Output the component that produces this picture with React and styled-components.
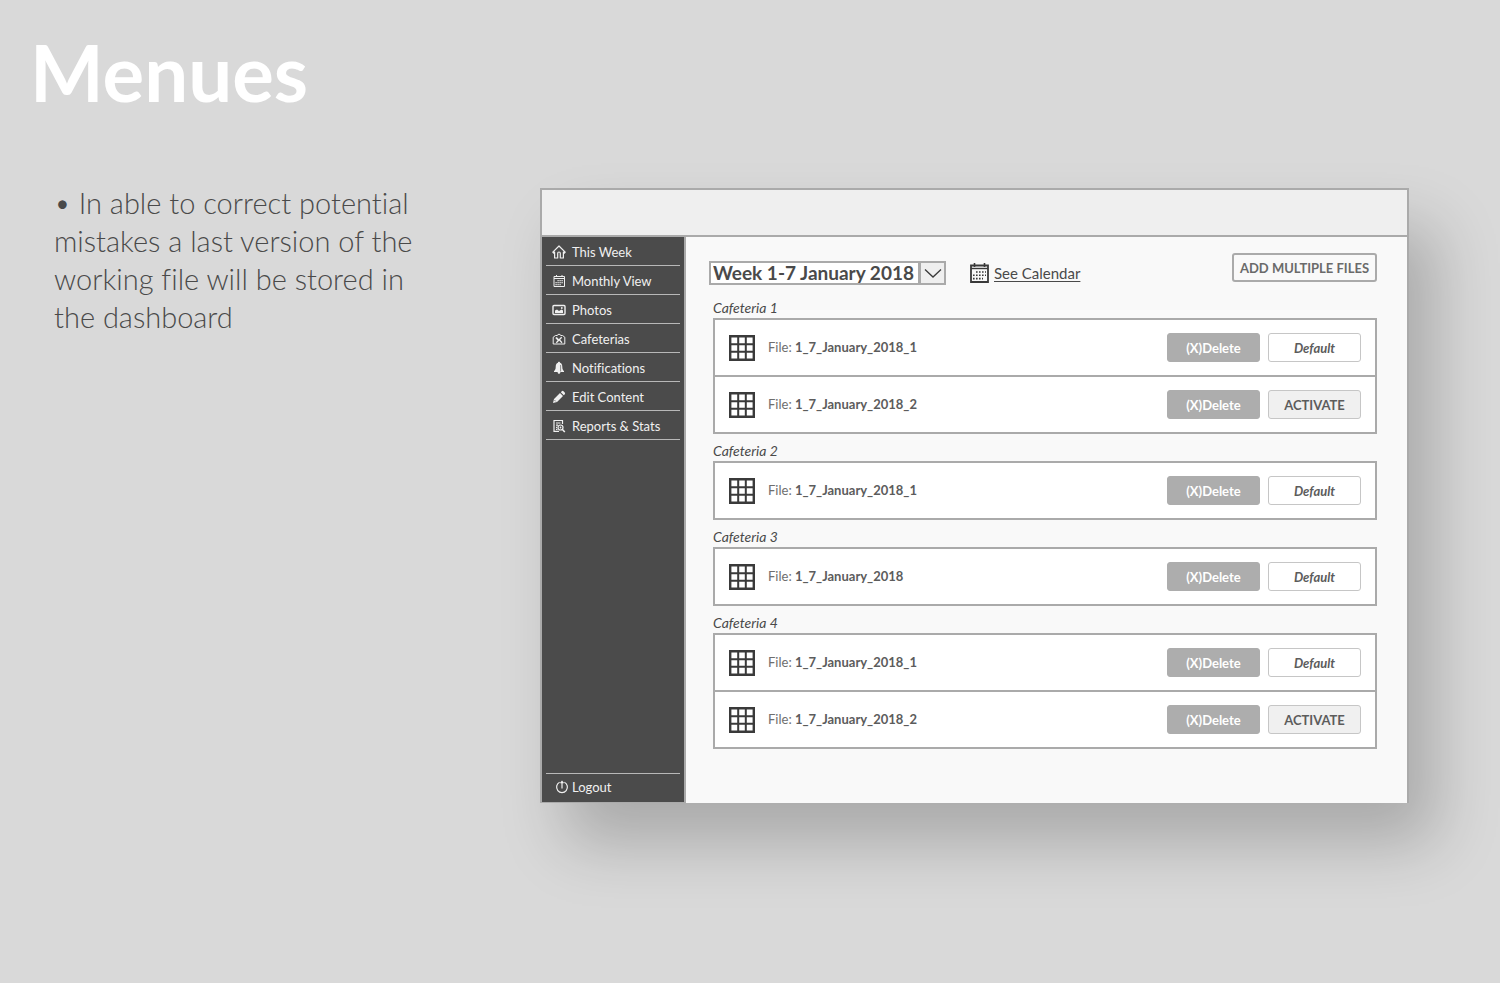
import React from "react";
import styled, { createGlobalStyle } from "styled-components";

const line = "#aaaaaa";
const ink = "#4a4a4a";

const GlobalStyle = createGlobalStyle`
  *, *::before, *::after { box-sizing: border-box; }
  body {
    margin: 0;
    background: #d9d9d9;
    color: ${ink};
    font-family: Lato, "Liberation Sans", sans-serif;
    font-variant-ligatures: no-common-ligatures;
  }
  button, select { font-family: inherit; margin: 0; }
`;

const Page = styled.main`
  min-height: 100vh;
  padding: 28px 91px 64px 30px;
`;

const Title = styled.h1`
  margin: 0;
  color: #fff;
  font-size: 78px;
  line-height: 88px;
  font-weight: 700;
`;

const Slide = styled.div`
  display: grid;
  grid-template-columns: minmax(240px, 374px) minmax(0, 1fr);
  gap: 112px;
  align-items: start;
  padding: 68px 0 0 24px;
`;

const Note = styled.p`
  margin: 0;
  font-size: 29px;
  line-height: 38px;
  font-weight: 300;
`;

const Window = styled.section`
  margin-top: 4px;
  border: 2px solid ${line};
  border-bottom: 0;
  background: #f9f9f9;
  box-shadow: 26px 40px 60px rgba(0, 0, 0, 0.22);
`;

const TitleBar = styled.header`
  height: 47px;
  background: #efefef;
  border-bottom: 2px solid ${line};
`;

const Columns = styled.div`
  display: grid;
  grid-template-columns: 144px minmax(0, 1fr);
`;

const Sidebar = styled.nav`
  display: flex;
  flex-direction: column;
  justify-content: space-between;
  background: #4b4b4b;
  border-right: 2px solid ${line};
  border-bottom: 1px solid ${line};
  padding: 0 4px;
`;

const NavList = styled.ul`
  list-style: none;
  margin: 0;
  padding: 0;
`;

const NavItem = styled.li`
  height: 29px;
  border-bottom: ${(p) => (p.$last ? "0" : "1px solid #b8b8b8")};
  border-top: ${(p) => (p.$last ? "1px solid #b8b8b8" : "0")};
`;

const NavLink = styled.a`
  display: grid;
  grid-template-columns: 14px 1fr;
  gap: ${(p) => (p.$low ? "3px" : "6px")};
  align-items: center;
  height: ${(p) => (p.$low ? "25px" : "28px")};
  padding: 1px 0 0 ${(p) => (p.$low ? "9px" : "6px")};
  color: #f0f0f0;
  font-size: 13px;
  line-height: 18px;
  text-decoration: none;
  white-space: nowrap;
`;

const Content = styled.div`
  padding: 16px 30px 54px 27px;
`;

const Toolbar = styled.div`
  display: flex;
  align-items: flex-start;
  margin-left: -4px;
  height: 38px;
`;

const WeekPicker = styled.label`
  position: relative;
  display: block;
  width: 237px;
  margin: 8px 24px 0 0;
`;

const WeekSelect = styled.select`
  appearance: none;
  display: block;
  width: 100%;
  height: 24px;
  padding: 0 26px 0 2px;
  border: 2px solid ${line};
  border-radius: 0;
  background: #fff;
  color: ${ink};
  font-size: 19px;
  line-height: 20px;
  font-weight: 700;
`;

const Caret = styled.span`
  position: absolute;
  top: 0;
  right: 0;
  width: 28px;
  height: 24px;
  border: 2px solid ${line};
  border-left-width: 3px;
  background: #efefef;
  pointer-events: none;
  svg { display: block; }
`;

const CalendarLink = styled.a`
  display: flex;
  align-items: center;
  gap: 5px;
  margin-top: 10px;
  color: ${ink};
  font-size: 15px;
  line-height: 20px;
  text-underline-offset: 2px;
`;

const AddButton = styled.button`
  margin-left: auto;
  height: 29px;
  width: 145px;
  padding: 0;
  border: 2px solid ${line};
  border-radius: 3px;
  background: #f9f9f9;
  color: #6a6a6a;
  font-size: 13px;
  font-weight: 700;
`;

const Caption = styled.h2`
  margin: 0;
  height: 27px;
  padding-top: 8px;
  font-size: 14px;
  line-height: 18px;
  font-weight: 400;
  font-style: italic;
`;

const FileList = styled.ul`
  list-style: none;
  margin: 0;
  padding: 0;
  border: 2px solid ${line};
  background: #fff;
`;

const FileRow = styled.li`
  display: flex;
  align-items: center;
  gap: 8px;
  height: 55px;
  padding: 0 14px;
  & + & {
    height: 57px;
    border-top: 2px solid ${line};
  }
`;

const FileName = styled.span`
  flex: 1;
  padding: 0 0 2px 5px;
  color: #6e6e6e;
  font-size: 13px;
  line-height: 18px;
  strong { color: #5c5c5c; }
`;

const RowButton = styled.button`
  width: 93px;
  height: 29px;
  padding: 0;
  border: 1px solid ${(p) => (p.$kind === "delete" ? "#adadad" : "#c6c6c6")};
  border-radius: 3px;
  background: ${(p) => ({ delete: "#adadad", activate: "#f0f0f0", default: "#fff" })[p.$kind]};
  color: ${(p) => (p.$kind === "delete" ? "#fff" : "#5c5c5c")};
  font-size: 13px;
  font-weight: 700;
  font-style: ${(p) => (p.$kind === "default" ? "italic" : "normal")};
`;

const Glyph = ({ children }) => (
  <svg width="14" height="14" viewBox="0 0 14 14" fill="none" stroke="#f0f0f0" strokeWidth="1" aria-hidden="true">
    {children}
  </svg>
);

const HomeIcon = () => (
  <Glyph>
    <path d="M.8 7.200 7 1l6.200 6.200-.8.800-1-.9v5.900H8.300V8.300Q8.300 7 7 7T5.700 8.300V13H2.600V7.100l-1 .9z" strokeWidth="1.200" strokeLinejoin="round" />
  </Glyph>
);
const MonthIcon = () => (
  <Glyph>
    <path d="M2 2.500h10.500v10H2zM2 4.500h10.500M4.500 1v2M10 1v2" />
    <path d="M5.500 6.700h5.500M3.500 8.700H11M3.500 10.700h5.500" strokeWidth="1.200" strokeDasharray="1.200 .8" />
  </Glyph>
);
const PhotoIcon = () => (
  <Glyph>
    <rect x="1" y="2.500" width="12" height="9" rx="1" strokeWidth="1.400" />
    <path d="M3 10V7.500l2-1L7 8l2.500-1.500L11 7.500V10z" fill="#f0f0f0" stroke="none" />
    <circle cx="9.800" cy="5" r=".9" fill="#f0f0f0" stroke="none" />
  </Glyph>
);
const CafeteriaIcon = () => (
  <Glyph>
    <path d="M1.200 12V5.200L3.500 3.500H5L7 2l2 1.500h1.500l2.300 1.700V12z" />
    <path d="m4.300 10.700 5.400-5.400M7.500 8l2.500 2.700" strokeWidth="1.300" />
    <path d="m4 5.500 2.500 2.700" strokeWidth="1.800" />
  </Glyph>
);
const BellIcon = () => (
  <Glyph>
    <path d="M7 .8c.7 0 1 .4 1 1 1.700.6 2.300 2 2.300 4.200 0 2.200.7 3.300 1.700 4v1H8.400c0 1-.6 1.800-1.400 1.800S5.600 12 5.600 11H2v-1c1-.7 1.700-1.800 1.700-4 0-2.200.6-3.600 2.300-4.200 0-.6.300-1 1-1z" fill="#f0f0f0" stroke="none" />
    <path d="M8.600 4v6.500" stroke="#4b4b4b" strokeWidth=".6" />
  </Glyph>
);
const PencilIcon = () => (
  <Glyph>
    <path d="m1 13 1-4 6-6 3 3-6 6zM8.800 2.200l1-1q.9-.7 1.700.1l1.200 1.200q.8.800.1 1.700l-1 1z" fill="#f0f0f0" stroke="none" />
    <path d="m2.700 10.300 1 1" stroke="#4b4b4b" strokeWidth="1" />
  </Glyph>
);
const ReportIcon = () => (
  <Glyph>
    <path d="M7 12.300H2V1.500h8.500V5M4 4h4.500M4 6.200h2M4 8.400h1M4 10.400h1.500" strokeWidth="1.200" />
    <circle cx="8.500" cy="8.500" r="2.500" strokeWidth="1.200" />
    <path d="m10.200 10.300 2.600 2.700" strokeWidth="1.600" />
    <circle cx="8.500" cy="8.500" r=".9" fill="#f0f0f0" stroke="none" />
  </Glyph>
);
const LogoutIcon = () => (
  <Glyph>
    <path d="M4.600 2.300a5.400 5.400 0 1 0 4.800 0" strokeWidth="1.200" />
    <path d="M7 8.500V2M5.500 3.200 7 1.500l1.500 1.700" strokeWidth="1.200" />
  </Glyph>
);
const CalendarIcon = () => (
  <svg width="19" height="20" viewBox="0 0 19 20" fill="none" stroke="#3a3a3a" aria-hidden="true">
    <path d="M1 2.500h17v16.500H1z" strokeWidth="1.800" />
    <path d="M1 5.500h17" strokeWidth="1.400" />
    <path d="M4.500 0v4M14.500 0v4" strokeWidth="1.600" />
    <path d="M6 9h10M3 12.300h13M3 15.600h10" strokeWidth="1.600" strokeDasharray="1.600 1.400" />
  </svg>
);
const SheetIcon = () => (
  <svg width="26" height="26" viewBox="0 0 26 26" fill="none" stroke="#3a3a3a" aria-hidden="true">
    <path d="M1.200 1.200h23.600v23.600H1.200z" strokeWidth="2.400" />
    <path d="M9.200 1v24M16.800 1v24M1 9.200h24M1 16.800h24" strokeWidth="2" />
  </svg>
);

const nav = [
  ["This Week", HomeIcon],
  ["Monthly View", MonthIcon],
  ["Photos", PhotoIcon],
  ["Cafeterias", CafeteriaIcon],
  ["Notifications", BellIcon],
  ["Edit Content", PencilIcon],
  ["Reports & Stats", ReportIcon],
];

const cafeterias = [
  { name: "Cafeteria 1", files: ["1_7_January_2018_1", "1_7_January_2018_2"] },
  { name: "Cafeteria 2", files: ["1_7_January_2018_1"] },
  { name: "Cafeteria 3", files: ["1_7_January_2018"] },
  { name: "Cafeteria 4", files: ["1_7_January_2018_1", "1_7_January_2018_2"] },
];

export default function App() {
  return (
    <Page>
      <GlobalStyle />
      <Title>Menues</Title>
      <Slide>
        <Note>• In able to correct potential mistakes a last version of the working file will be stored in the dashboard</Note>
        <Window>
          <TitleBar />
          <Columns>
            <Sidebar>
              <NavList>
                {nav.map(([label, Icon]) => (
                  <NavItem key={label}>
                    <NavLink href="#"><Icon />{label}</NavLink>
                  </NavItem>
                ))}
              </NavList>
              <NavList>
                <NavItem $last>
                  <NavLink href="#" $low><LogoutIcon />Logout</NavLink>
                </NavItem>
              </NavList>
            </Sidebar>
            <Content>
              <Toolbar>
                <WeekPicker>
                  <WeekSelect aria-label="Week" defaultValue="w1">
                    <option value="w1">Week 1-7 January 2018</option>
                  </WeekSelect>
                  <Caret>
                    <svg width="23" height="20" viewBox="0 0 23 20" fill="none" stroke="#3a3a3a" strokeWidth="1.300" aria-hidden="true">
                      <path d="m4 6.500 8 7.500 8-7.500" />
                    </svg>
                  </Caret>
                </WeekPicker>
                <CalendarLink href="#"><CalendarIcon />See Calendar</CalendarLink>
                <AddButton type="button">ADD MULTIPLE FILES</AddButton>
              </Toolbar>
              {cafeterias.map((c) => (
                <section key={c.name}>
                  <Caption>{c.name}</Caption>
                  <FileList>
                    {c.files.map((file, i) => (
                      <FileRow key={file}>
                        <SheetIcon />
                        <FileName>File: <strong>{file}</strong></FileName>
                        <RowButton type="button" $kind="delete">(X)Delete</RowButton>
                        <RowButton type="button" $kind={i === 0 ? "default" : "activate"}>
                          {i === 0 ? "Default" : "ACTIVATE"}
                        </RowButton>
                      </FileRow>
                    ))}
                  </FileList>
                </section>
              ))}
            </Content>
          </Columns>
        </Window>
      </Slide>
    </Page>
  );
}
